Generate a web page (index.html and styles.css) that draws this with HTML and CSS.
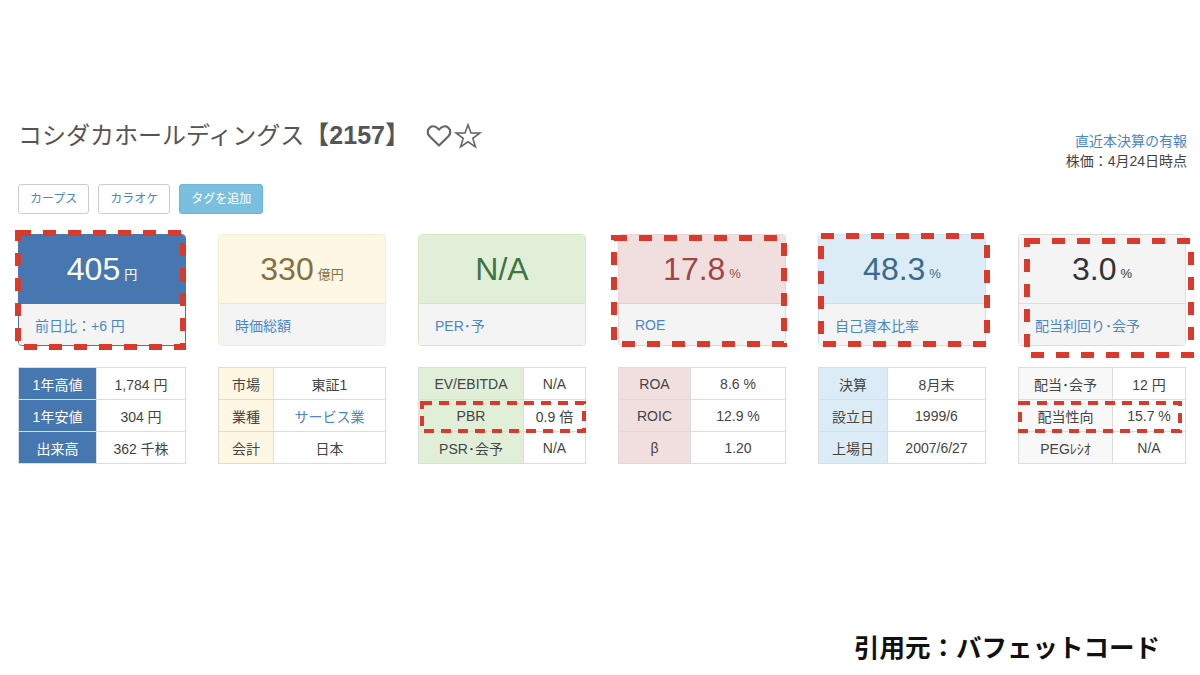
FILE: index.html
```html
<!DOCTYPE html>
<html lang="ja">
<head>
<meta charset="utf-8">
<title>コシダカホールディングス</title>
<link rel="stylesheet" href="styles.css">
</head>
<body>
<div class="page">
  <div class="header">
    <div class="title-row">
      <h1 class="title">コシダカホールディングス<span class="code">【2157】</span></h1>
      <svg class="icon" width="26" height="24" viewBox="0 0 26 24"><path d="M13 21.5 L3.6 12.2 C1 9.6 1.2 5.6 3.8 3.6 C6.4 1.6 10.2 2.2 13 5.6 C15.8 2.2 19.6 1.6 22.2 3.6 C24.8 5.6 25 9.6 22.4 12.2 Z" fill="none" stroke="#666" stroke-width="2.2" stroke-linejoin="round"/></svg>
      <svg class="icon" width="28" height="26" viewBox="0 0 28 26"><path d="M14 1.8 L17 10 L25.8 10.1 L18.8 15.4 L21.4 23.8 L14 18.8 L6.6 23.8 L9.2 15.4 L2.2 10.1 L11 10 Z" fill="none" stroke="#666" stroke-width="1.6" stroke-linejoin="miter"/></svg>
    </div>
    <div class="info">
      <a class="link">直近本決算の有報</a>
      <div class="date">株価：4月24日時点</div>
    </div>
  </div>

  <div class="tags">
    <span class="tag">カープス</span>
    <span class="tag">カラオケ</span>
    <span class="tag tag-add">タグを追加</span>
  </div>

  <div class="cards">
    <div class="cell">
      <div class="card c-blue">
        <div class="card-val"><span class="num">405</span><span class="unit">円</span></div>
        <div class="card-label">前日比：+6 円</div>
      </div>
      <svg class="mark mark-price" width="171" height="120"><rect x="3" y="3" width="165" height="114" fill="none" stroke="#d93a2b" stroke-width="6" stroke-dasharray="13 12"/></svg>
    </div>
    <div class="cell">
      <div class="card c-yellow">
        <div class="card-val"><span class="num">330</span><span class="unit">億円</span></div>
        <div class="card-label">時価総額</div>
      </div>
    </div>
    <div class="cell">
      <div class="card c-green">
        <div class="card-val"><span class="num">N/A</span></div>
        <div class="card-label">PER･予</div>
      </div>
    </div>
    <div class="cell">
      <div class="card c-red">
        <div class="card-val"><span class="num">17.8</span><span class="unit">%</span></div>
        <div class="card-label">ROE</div>
      </div>
      <svg class="mark mark-roe" width="176" height="112"><rect x="3" y="3" width="170" height="106" fill="none" stroke="#d93a2b" stroke-width="6" stroke-dasharray="13 12"/></svg>
    </div>
    <div class="cell">
      <div class="card c-cyan">
        <div class="card-val"><span class="num">48.3</span><span class="unit">%</span></div>
        <div class="card-label">自己資本比率</div>
      </div>
      <svg class="mark mark-equity" width="172" height="114"><rect x="3" y="3" width="166" height="108" fill="none" stroke="#d93a2b" stroke-width="6" stroke-dasharray="13 12"/></svg>
    </div>
    <div class="cell">
      <div class="card c-gray">
        <div class="card-val"><span class="num">3.0</span><span class="unit">%</span></div>
        <div class="card-label">配当利回り･会予</div>
      </div>
      <svg class="mark mark-yield" width="170" height="120"><rect x="3" y="3" width="164" height="114" fill="none" stroke="#d93a2b" stroke-width="6" stroke-dasharray="13 12"/></svg>
    </div>
  </div>

  <div class="tables">
    <div class="cell">
      <table class="tbl t-blue">
        <tr><th>1年高値</th><td>1,784 円</td></tr>
        <tr><th>1年安値</th><td>304 円</td></tr>
        <tr><th>出来高</th><td>362 千株</td></tr>
      </table>
    </div>
    <div class="cell">
      <table class="tbl t-yellow">
        <tr><th>市場</th><td>東証1</td></tr>
        <tr><th>業種</th><td class="blue">サービス業</td></tr>
        <tr><th>会計</th><td>日本</td></tr>
      </table>
    </div>
    <div class="cell">
      <table class="tbl t-green">
        <tr><th>EV/EBITDA</th><td>N/A</td></tr>
        <tr><th>PBR</th><td>0.9 倍</td></tr>
        <tr><th>PSR･会予</th><td>N/A</td></tr>
      </table>
      <svg class="mark mark-pbr" width="166" height="32"><rect x="2" y="2" width="162" height="28" fill="none" stroke="#d93a2b" stroke-width="4" stroke-dasharray="10 7"/></svg>
    </div>
    <div class="cell">
      <table class="tbl t-red">
        <tr><th>ROA</th><td>8.6 %</td></tr>
        <tr><th>ROIC</th><td>12.9 %</td></tr>
        <tr><th>β</th><td>1.20</td></tr>
      </table>
    </div>
    <div class="cell">
      <table class="tbl t-cyan">
        <tr><th>決算</th><td>8月末</td></tr>
        <tr><th>設立日</th><td>1999/6</td></tr>
        <tr><th>上場日</th><td>2007/6/27</td></tr>
      </table>
    </div>
    <div class="cell">
      <table class="tbl t-gray">
        <tr><th>配当･会予</th><td>12 円</td></tr>
        <tr><th>配当性向</th><td>15.7 %</td></tr>
        <tr><th>PEGﾚｼｵ</th><td>N/A</td></tr>
      </table>
      <svg class="mark mark-payout" width="164" height="32"><rect x="2" y="2" width="160" height="28" fill="none" stroke="#d93a2b" stroke-width="4" stroke-dasharray="10 7"/></svg>
    </div>
  </div>

  <div class="source">引用元：バフェットコード</div>
</div>
</body>
</html>
```

FILE: styles.css
```css
* { box-sizing: border-box; }
html, body { margin: 0; padding: 0; background: #fff; }
body {
  font-family: "Liberation Sans", "Noto Sans CJK JP", sans-serif;
  color: #333;
  width: 1200px;
  height: 675px;
  overflow: hidden;
}
.page { padding: 118px 13px 0 18px; }

.header {
  display: flex;
  justify-content: space-between;
  align-items: flex-start;
  height: 54px;
}
.title-row { display: flex; align-items: center; gap: 2px; }
.title {
  margin: 0 14px 0 0;
  font-size: 24px;
  line-height: 34px;
  font-weight: normal;
  color: #555;
}
.code { font-weight: bold; color: #555; font-size: 25px; }
.icon { display: block; }
.info {
  margin-top: 13px;
  text-align: right;
  font-size: 14px;
  line-height: 20px;
}
.link { color: #4a86c8; display: block; }
.date { color: #444; }

.tags { display: flex; gap: 9px; margin-top: 12px; }
.tag {
  height: 30px;
  padding: 0 11px;
  border: 1px solid #ccc;
  border-radius: 3px;
  font-size: 12px;
  line-height: 28px;
  color: #4a86c8;
  background: #fff;
}
.tag-add { background: #7bbfde; border-color: #6fb5d6; color: #fff; }

.cards, .tables {
  display: grid;
  grid-template-columns: repeat(6, 168px);
  column-gap: 32px;
}
.cards { margin-top: 20px; }
.tables { margin-top: 21px; }
.cell { position: relative; }

.card {
  height: 112px;
  border: 1px solid #ddd;
  border-radius: 4px;
  overflow: hidden;
  display: flex;
  flex-direction: column;
}
.card-val {
  height: 68px;
  display: flex;
  align-items: center;
  justify-content: center;
}
.num { font-size: 32px; line-height: 36px; }
.unit { font-size: 13px; margin-left: 4px; margin-top: 8px; }
.card-label {
  flex: 1;
  background: #f4f4f4;
  border-top: 1px solid #ddd;
  padding-left: 16px;
  display: flex;
  align-items: center;
  font-size: 14px;
  color: #4a86c8;
}
.c-blue { border-color: #4a77b1; }
.c-blue .card-val { background: #4777b1; color: #fff; }
.c-blue .card-label { border-top-color: #4a77b1; }
.c-yellow { border-color: #f6ecd0; }
.c-yellow .card-val { background: #fdf7e4; color: #86703f; }
.c-yellow .card-label { border-top-color: #f2e6c8; }
.c-green { border-color: #d6e9c6; }
.c-green .card-val { background: #e1efd9; color: #3f7540; }
.c-green .card-label { border-top-color: #d3e5c4; }
.c-red { border-color: #ebd2d4; }
.c-red .card-val { background: #f1dfdf; color: #a14545; }
.c-red .card-label { border-top-color: #e5cdd0; }
.c-cyan { border-color: #c8e4f0; }
.c-cyan .card-val { background: #dbecf6; color: #3a6a8e; }
.c-cyan .card-label { border-top-color: #c6e0ec; }
.c-gray { border-color: #ddd; }
.c-gray .card-val { background: #f4f4f4; color: #333; }
.c-gray .card-label { border-top-color: #ddd; }

.tbl {
  width: 168px;
  border-collapse: collapse;
  font-size: 14px;
  text-align: center;
}
.tbl th, .tbl td {
  height: 32px;
  padding: 0;
  border: 1px solid #ddd;
  font-weight: normal;
  color: #444;
}
.tbl td { background: #fff; }
.t-blue th { width: 78px; background: #4777b1; color: #fff; border-color: #ddd; }
.t-yellow th { width: 55px; background: #fdf7e4; }
.t-green th { width: 105px; background: #e1efd9; }
.t-red th { width: 72px; background: #f1dfdf; }
.t-cyan th { width: 69px; background: #dbecf6; }
.t-gray th { width: 94px; background: #f8f8f8; }
.blue { color: #4a86c8 !important; }

.mark { position: absolute; pointer-events: none; display: block; }
.mark-price { left: -3px; top: -4px; }
.mark-roe { left: -7px; top: 1px; }
.mark-equity { left: 0; top: -1px; }
.mark-yield { left: 6px; top: 4px; }
.mark-pbr { left: 2px; top: 34px; }
.mark-payout { left: 0; top: 34px; }

.source {
  margin-top: 164px;
  margin-right: 27px;
  text-align: right;
  font-size: 25.5px;
  line-height: 36px;
  font-weight: bold;
  color: #111;
  font-family: "Noto Sans CJK JP", sans-serif;
}
```
